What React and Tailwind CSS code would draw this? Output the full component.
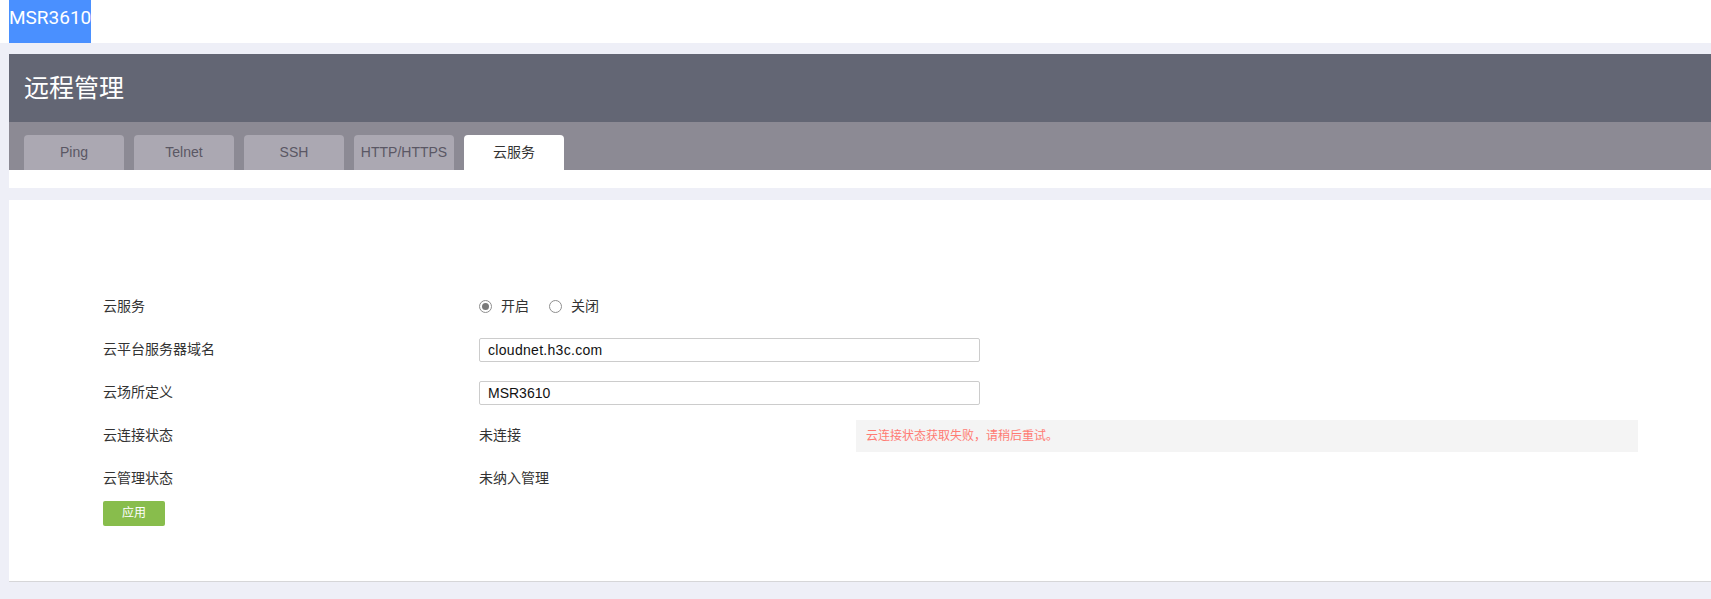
const FONT = { fontFamily: '"Liberation Sans", "Noto Sans CJK SC", sans-serif' };

const TABS = ["Ping", "Telnet", "SSH", "HTTP/HTTPS", "云服务"];
const ACTIVE = "云服务";

function Radio({ checked, label }) {
  return (
    <label className="flex items-center gap-[9px] text-[14px] text-[#333]">
      <span className="w-[13px] h-[13px] rounded-full border border-[#8f8f8f] bg-white flex items-center justify-center">
        {checked && <span className="w-[7px] h-[7px] rounded-full bg-[#7a7a7a]" />}
      </span>
      {label}
    </label>
  );
}

function Row({ label, children, extra }) {
  return (
    <div className="flex items-center h-[43px]">
      <div className="w-[376px] text-[14px] text-[#333]">{label}</div>
      <div className="w-[377px] flex items-center">{children}</div>
      {extra}
    </div>
  );
}

export default function App() {
  return (
    <div className="min-h-[599px] bg-[#eeeff7]" style={FONT}>
      <div className="bg-white h-[43px]">
        <div className="ml-[9px] w-[82px] h-[43px] bg-[#4a90ff] text-white text-[19px] leading-[36px]" style={{ fontFamily: 'Roboto, "Liberation Sans", sans-serif' }}>
          MSR3610
        </div>
      </div>

      <div className="pl-[9px] pt-[11px]">
        <div className="bg-[#636674] h-[68px] flex items-center pl-[15px] pt-[2px]">
          <h1 className="text-white text-[25px]">远程管理</h1>
        </div>
        <div className="bg-[#8c8a94] h-[48px] flex items-end gap-[10px] pl-[15px]">
          {TABS.map((t) => (
            <div
              key={t}
              className={
                "w-[100px] h-[35px] rounded-t-[4px] flex items-center justify-center text-[14px] " +
                (t === ACTIVE ? "bg-white text-[#333]" : "bg-[#aba8b2] text-[#5a5764]")
              }
            >
              {t}
            </div>
          ))}
        </div>
        <div className="bg-white h-[18px]" />

        <div className="mt-[12px] bg-white h-[382px] border-b border-[#d6d6d8] pt-[85px] pl-[94px]">
          <Row label="云服务">
            <div className="flex items-center gap-[20px]">
              <Radio checked label="开启" />
              <Radio label="关闭" />
            </div>
          </Row>
          <Row label="云平台服务器域名">
            <input
              readOnly
              value="cloudnet.h3c.com"
              className="w-[501px] h-[24px] border border-[#cccccc] rounded-[2px] px-[8px] text-[14px] tracking-[0.3px] text-[#111] outline-none shrink-0"
            />
          </Row>
          <Row label="云场所定义">
            <input
              readOnly
              value="MSR3610"
              className="w-[501px] h-[24px] border border-[#cccccc] rounded-[2px] px-[8px] text-[14px] text-[#111] outline-none shrink-0"
            />
          </Row>
          <Row
            label="云连接状态"
            extra={
              <div className="w-[782px] h-[32px] bg-[#f4f4f4] flex items-center px-[10px] text-[12px] text-[#ff7b73]">
                云连接状态获取失败，请稍后重试。
              </div>
            }
          >
            <span className="text-[14px] text-[#333]">未连接</span>
          </Row>
          <Row label="云管理状态">
            <span className="text-[14px] text-[#333]">未纳入管理</span>
          </Row>
          <button className="w-[62px] h-[25px] rounded-[2px] bg-[#88bd4c] text-white text-[12px]">
            应用
          </button>
        </div>
      </div>
    </div>
  );
}
